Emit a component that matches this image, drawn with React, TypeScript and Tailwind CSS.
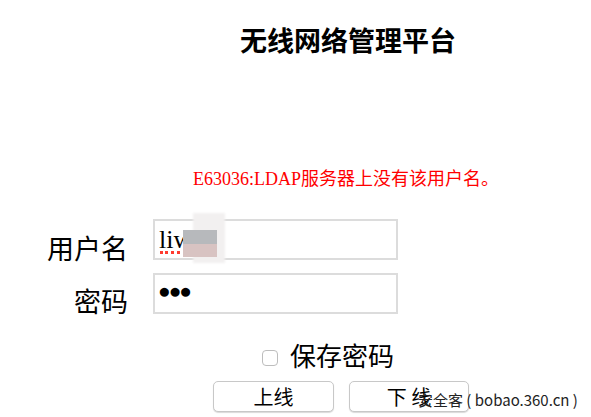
import React from "react";

const serif = { fontFamily: '"Liberation Serif", "Noto Sans CJK SC", serif' };

const App = () => {
    return (
        <div className="relative w-[591px] h-[417px] bg-white overflow-hidden text-black" style={serif}>
            {/* title */}
            <div className="pt-[26px] pl-[240px] text-[27px] leading-[32px] font-bold whitespace-nowrap">
                无线网络管理平台
            </div>

            {/* error */}
            <div className="mt-[110px] pl-[193px] text-[18px] leading-[22px] text-[#ff0000] whitespace-nowrap">
                E63036:LDAP服务器上没有该用户名。
            </div>

            {/* form */}
            <div className="mt-[29px] flex flex-col gap-[13px]">
                <div className="flex items-start h-[41px]">
                    <label className="w-[128px] mt-[15px] text-right text-[27px] leading-[32px]">用户名</label>
                    <div className="relative ml-[25px] w-[245px] h-[41px] border-2 border-[#dcdcdc] bg-white">
                        <span className="absolute left-[4px] top-[4px] text-[26px] leading-[30px]">liw</span>
                        <span className="absolute left-[5px] top-[30px] w-[32px] border-b-[3px] border-dotted border-[#ff3b2f]"></span>
                        <span className="absolute left-[38px] top-[-8px] w-[32px] h-[50px] bg-[#f2f0f0] blur-[1px]"></span>
                        <span className="absolute left-[28px] top-[9px] w-[34px] h-[14px] bg-[#b7b9bc]"></span>
                        <span className="absolute left-[28px] top-[23px] w-[34px] h-[13px] bg-[#d8c3c2]"></span>
                    </div>
                </div>
                <div className="flex items-start h-[41px]">
                    <label className="w-[128px] mt-[14px] text-right text-[27px] leading-[32px]">密码</label>
                    <div className="relative ml-[25px] w-[245px] h-[41px] border-2 border-[#dcdcdc] bg-white">
                        <span className="absolute left-[3px] top-[2px] text-[21px] leading-[28px] font-bold tracking-[-2px]">●●●</span>
                    </div>
                </div>
            </div>

            {/* remember */}
            <div className="mt-[29px] flex items-center pl-[262px]">
                <span className="w-[16px] h-[16px] rounded-[4px] border border-[#bdbdbd] bg-white"></span>
                <span className="ml-[12px] text-[26px] leading-[30px]">保存密码</span>
            </div>

            {/* buttons */}
            <div className="mt-[8px] flex pl-[213px] gap-[15px]">
                <button className="w-[121px] h-[31px] rounded-[5px] border border-[#c8c8c8] bg-white shadow-[0_1px_1px_rgba(0,0,0,0.15)] text-[20px] leading-[24px]" style={{ fontFamily: '"Noto Sans CJK SC", sans-serif' }}>
                    上线
                </button>
                <button className="w-[120px] h-[31px] rounded-[5px] border border-[#c8c8c8] bg-white shadow-[0_1px_1px_rgba(0,0,0,0.15)] text-[20px] leading-[24px]" style={{ fontFamily: '"Noto Sans CJK SC", sans-serif' }}>
                    下 线
                </button>
            </div>

            {/* watermark */}
            <div className="absolute left-[418px] top-[390px] text-[15px] leading-[20px] text-[#222] whitespace-nowrap" style={{ fontFamily: '"Noto Sans CJK SC", sans-serif' }}>
                安全客 ( bobao.360.cn )
            </div>
        </div>
    );
};

export default App;
